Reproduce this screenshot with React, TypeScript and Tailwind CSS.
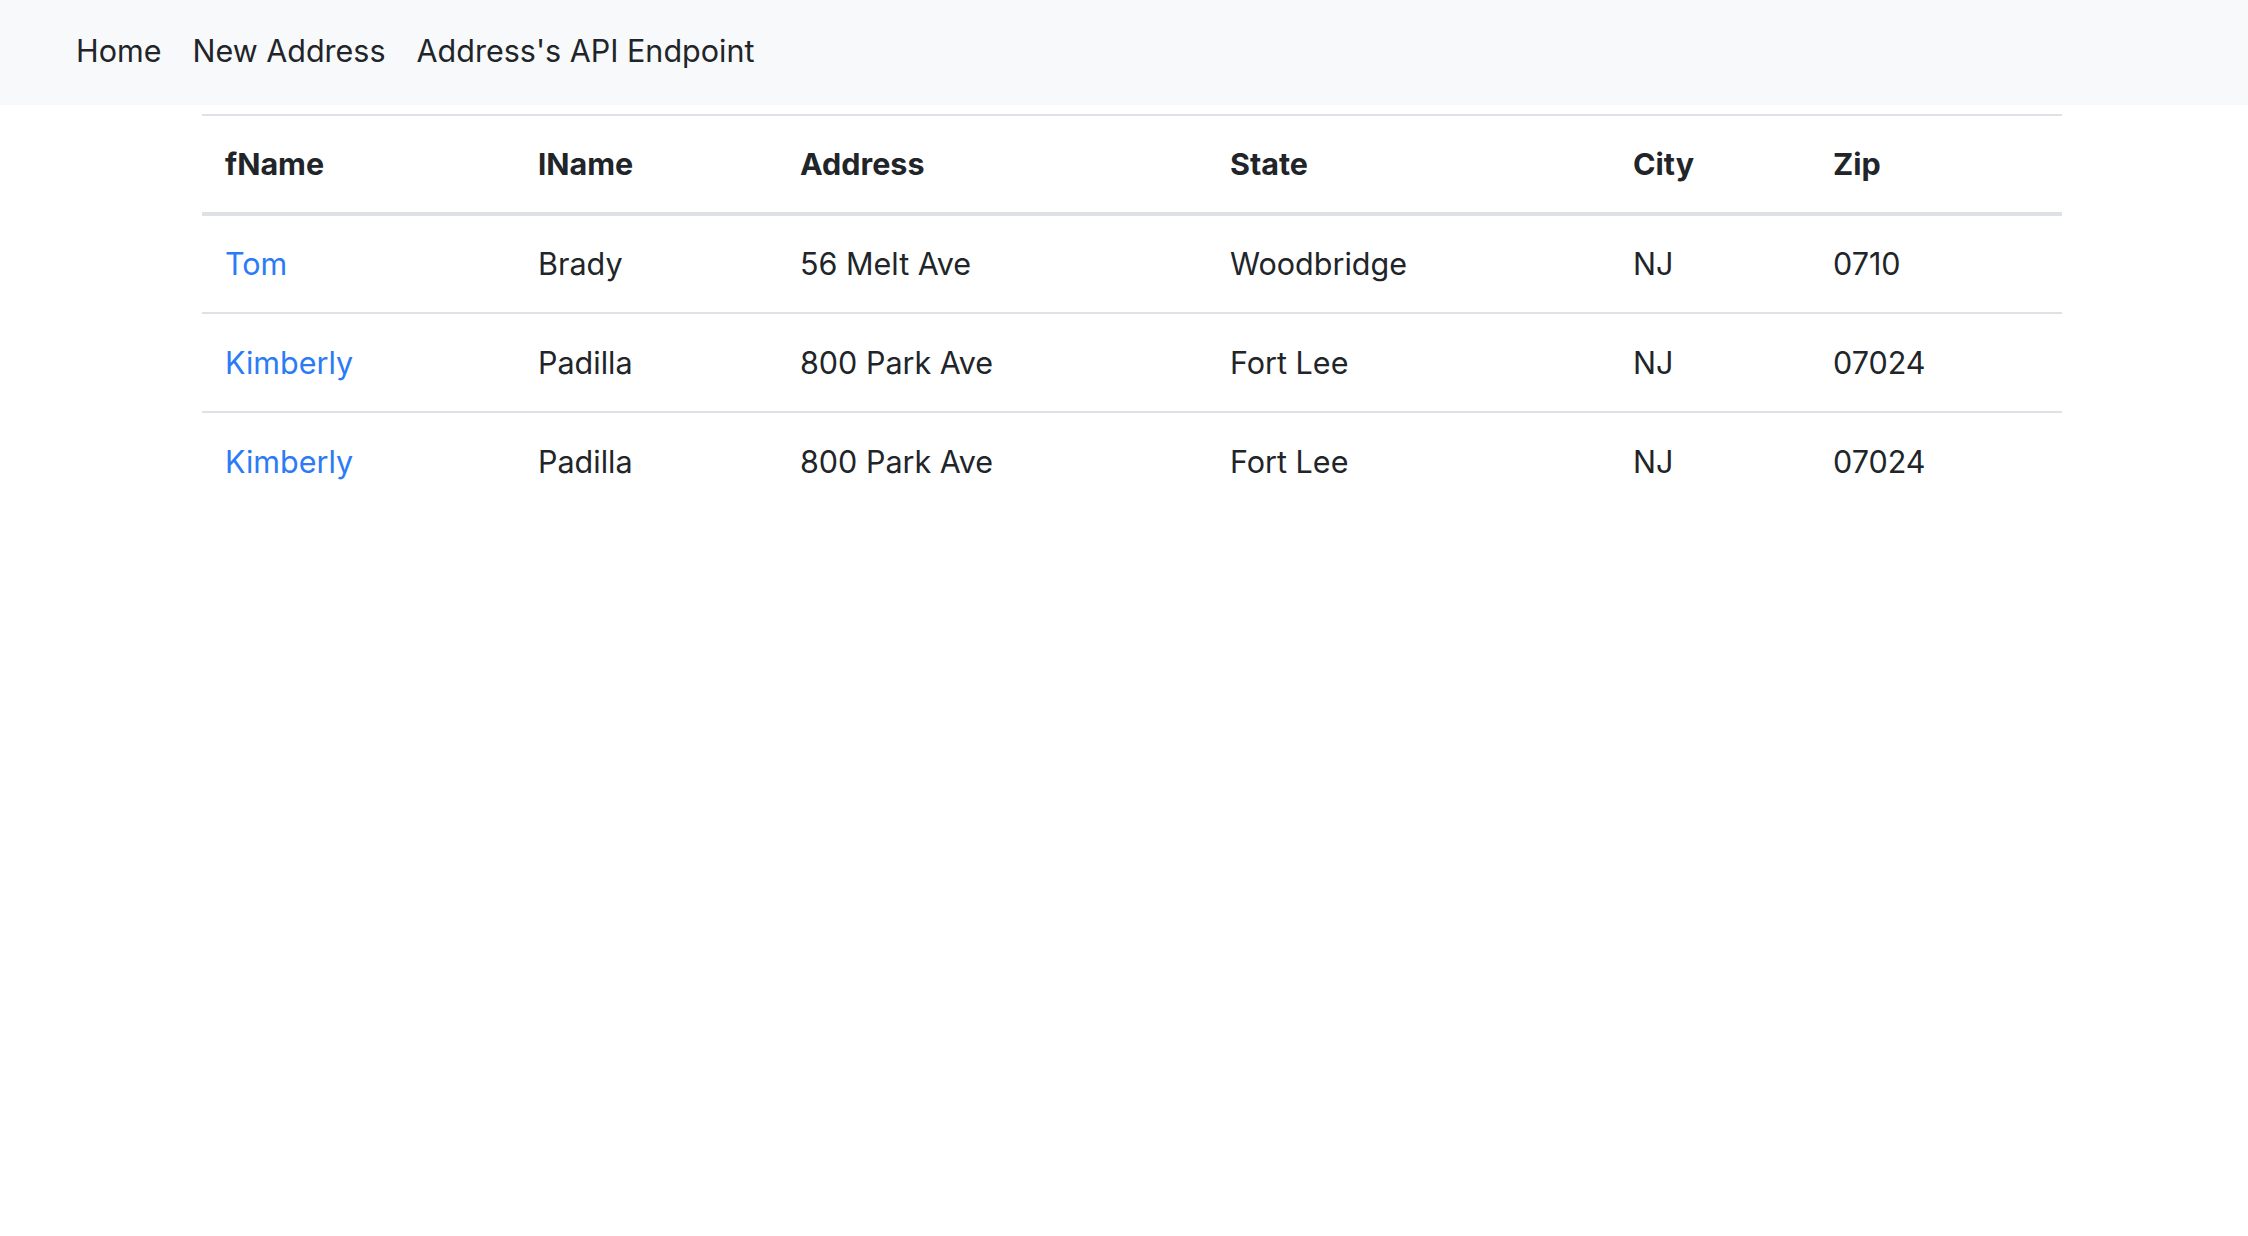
const rows = [
  { fName: 'Tom', lName: 'Brady', address: '56 Melt Ave', state: 'Woodbridge', city: 'NJ', zip: '0710' },
  { fName: 'Kimberly', lName: 'Padilla', address: '800 Park Ave', state: 'Fort Lee', city: 'NJ', zip: '07024' },
  { fName: 'Kimberly', lName: 'Padilla', address: '800 Park Ave', state: 'Fort Lee', city: 'NJ', zip: '07024' },
];

const headers = ['fName', 'lName', 'Address', 'State', 'City', 'Zip'];

export default function App() {
  return (
    <div className="min-h-screen bg-white text-[#212529] font-['Inter','Liberation_Sans',sans-serif]">
      {/* Navbar */}
      <nav className="flex h-[105px] items-center gap-[31px] bg-[#f8f9fa] pb-[4px] pl-[76px] text-[30.5px]">
        <a href="#" className="text-[#212529]">Home</a>
        <a href="#" className="text-[#212529]">New Address</a>
        <a href="#" className="text-[#212529]">Address's API Endpoint</a>
      </nav>

      {/* Address table */}
      <table className="mt-[9px] ml-[202px] w-[1860px] table-fixed border-collapse border-t-2 border-[#dee2e6] text-left text-[30.5px]">
        <colgroup>
          <col className="w-[313px]" />
          <col className="w-[262px]" />
          <col className="w-[430px]" />
          <col className="w-[403px]" />
          <col className="w-[200px]" />
          <col className="w-[252px]" />
        </colgroup>
        <thead>
          <tr className="border-b-4 border-[#dee2e6]">
            {headers.map((h) => (
              <th key={h} className="h-[99px] px-[23px] align-middle font-bold">
                {h}
              </th>
            ))}
          </tr>
        </thead>
        <tbody>
          {rows.map((r, i) => (
            <tr key={i} className={i < rows.length - 1 ? 'border-b-2 border-[#dee2e6]' : ''}>
              <td className="h-[99px] px-[23px] align-middle">
                <a href="#" className="text-[#2b7bf6]">{r.fName}</a>
              </td>
              <td className="px-[23px] align-middle">{r.lName}</td>
              <td className="px-[23px] align-middle">{r.address}</td>
              <td className="px-[23px] align-middle">{r.state}</td>
              <td className="px-[23px] align-middle">{r.city}</td>
              <td className="px-[23px] align-middle">{r.zip}</td>
            </tr>
          ))}
        </tbody>
      </table>
    </div>
  );
}
